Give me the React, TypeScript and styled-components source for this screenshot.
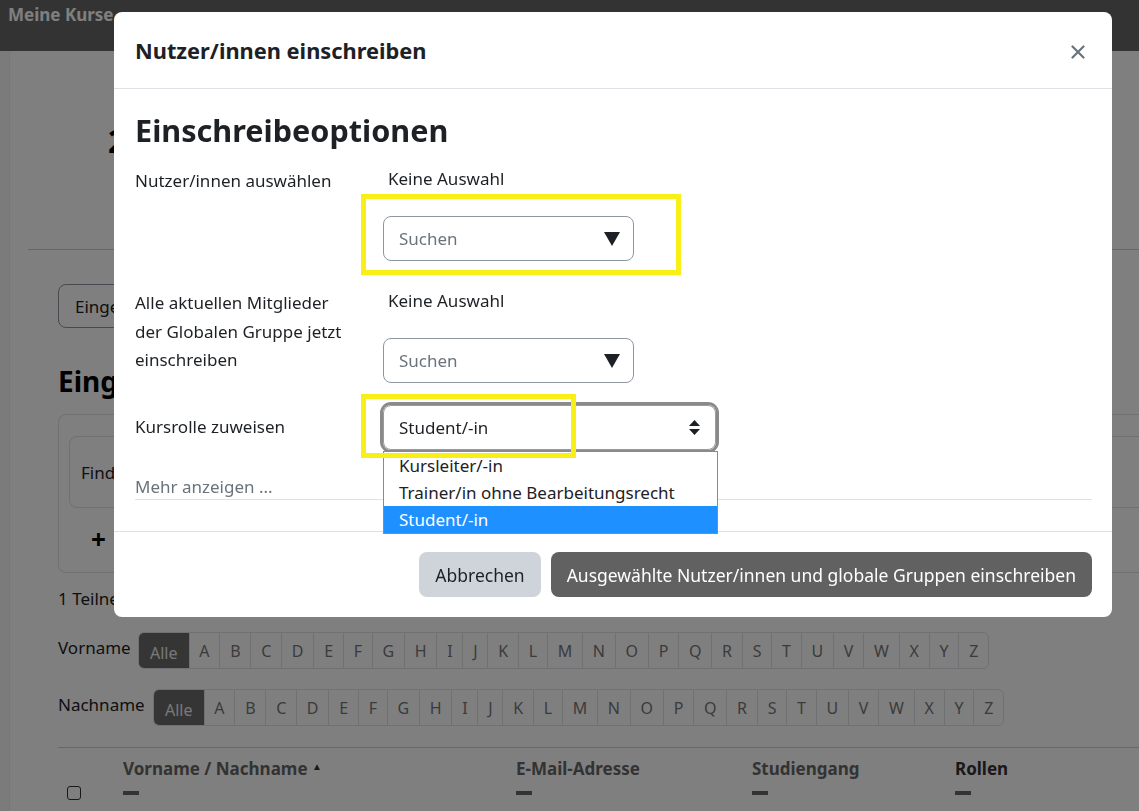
import styled, { createGlobalStyle } from 'styled-components';

const GlobalStyle = createGlobalStyle`
  html, body {
    margin: 0;
    padding: 0;
  }

  body {
    width: 1139px;
    height: 811px;
    overflow: hidden;
    background: #ffffff;
    color: #1d2125;
    font-family: 'Noto Sans', 'Open Sans', sans-serif;
  }
`;

const letters = 'ABCDEFGHIJKLMNOPQRSTUVWXYZ'.split('');

const roles = ['Kursleiter/-in', 'Trainer/in ohne Bearbeitungsrecht', 'Student/-in'];

function CaretDown() {
  return (
    <svg width='16' height='14' viewBox='0 0 16 14'>
      <polygon points='0,0 16,0 8,14' fill='#1d2125' />
    </svg>
  );
}

function UpDown() {
  return (
    <svg width='11' height='15' viewBox='0 0 11 15'>
      <polygon points='5.5,0 11,6 0,6' fill='#1d2125' />
      <polygon points='0,9 11,9 5.5,15' fill='#1d2125' />
    </svg>
  );
}

function CloseIcon() {
  return (
    <svg width='14' height='14' viewBox='0 0 14 14'>
      <path d='M1.5 1.5 L12.5 12.5 M12.5 1.5 L1.5 12.5' stroke='#6a737b' strokeWidth='2.2' strokeLinecap='round' />
    </svg>
  );
}

function InitialsBar({ label, offset }: { label: string; offset: number }) {
  return (
    <InitialsRow>
      <InitialsLabel style={{ width: offset }}>{label}</InitialsLabel>
      <InitialsGroup>
        <Initial $active>Alle</Initial>
        {letters.map((letter) => (
          <Initial key={letter}>{letter}</Initial>
        ))}
      </InitialsGroup>
    </InitialsRow>
  );
}

function BackgroundPage() {
  return (
    <Page>
      <NavBar>
        <Brand>Meine Kurse</Brand>
      </NavBar>
      <PageBody>
        <Rail />
        <Main>
          <CourseHeader>
            <CourseTitle>2023</CourseTitle>
          </CourseHeader>
          <Content>
            <ViewSelect>Eingeschrieben</ViewSelect>
            <PageTitle>Eingeschrieben</PageTitle>
            <FilterPanel>
              <FilterRow>Finden</FilterRow>
              <AddFilter>+</AddFilter>
            </FilterPanel>
            <Count>1 Teilnehmer/in gefunden</Count>
            <InitialsBar label='Vorname' offset={80} />
            <InitialsBar label='Nachname' offset={95} />
            <Table>
              <HeaderRow>
                <CheckCell />
                <HeadCell $width={393}>
                  Vorname / Nachname <SortArrow>▲</SortArrow>
                </HeadCell>
                <HeadCell $width={236}>E-Mail-Adresse</HeadCell>
                <HeadCell $width={203}>Studiengang</HeadCell>
                <HeadCell $width={120} $strong>
                  Rollen
                </HeadCell>
              </HeaderRow>
              <BodyRow>
                <CheckCell>
                  <CheckBox />
                </CheckCell>
                <DashCell $width={393}>
                  <Dash />
                </DashCell>
                <DashCell $width={236}>
                  <Dash />
                </DashCell>
                <DashCell $width={203}>
                  <Dash />
                </DashCell>
                <DashCell $width={120}>
                  <Dash />
                </DashCell>
              </BodyRow>
            </Table>
          </Content>
        </Main>
      </PageBody>
    </Page>
  );
}

function EnrolModal() {
  return (
    <Modal>
      <ModalHeader>
        <ModalTitle>Nutzer/innen einschreiben</ModalTitle>
        <CloseButton aria-label='Schließen'>
          <CloseIcon />
        </CloseButton>
      </ModalHeader>

      <ModalBody>
        <SectionTitle>Einschreibeoptionen</SectionTitle>

        <FormRow>
          <FieldLabel>Nutzer/innen auswählen</FieldLabel>
          <FieldControl>
            <NoSelection>Keine Auswahl</NoSelection>
            <SearchSelect>
              <Placeholder>Suchen</Placeholder>
              <CaretDown />
              <Highlight $left={-23} $top={-23} $width={320} $height={81} />
            </SearchSelect>
          </FieldControl>
        </FormRow>

        <FormRow $gap={18}>
          <FieldLabel>
            <LabelLine>Alle aktuellen Mitglieder</LabelLine>
            <LabelLine>der Globalen Gruppe jetzt</LabelLine>
            <LabelLine>einschreiben</LabelLine>
          </FieldLabel>
          <FieldControl>
            <NoSelection>Keine Auswahl</NoSelection>
            <SearchSelect>
              <Placeholder>Suchen</Placeholder>
              <CaretDown />
            </SearchSelect>
          </FieldControl>
        </FormRow>

        <RoleRow>
          <FieldLabel>Kursrolle zuweisen</FieldLabel>
          <RoleSelect>
            <RoleValue>Student/-in</RoleValue>
            <UpDown />
            <OptionList>
              {roles.map((role, index) => (
                <Option key={role} $selected={index === roles.length - 1}>
                  {role}
                </Option>
              ))}
            </OptionList>
            <Highlight $left={-23} $top={-12} $width={215} $height={64} />
          </RoleSelect>
        </RoleRow>

        <MoreLink>Mehr anzeigen ...</MoreLink>
      </ModalBody>

      <ModalFooter>
        <Button>Abbrechen</Button>
        <Button $primary>Ausgewählte Nutzer/innen und globale Gruppen einschreiben</Button>
      </ModalFooter>
    </Modal>
  );
}

export default function App() {
  return (
    <>
      <GlobalStyle />
      <BackgroundPage />
      <Backdrop />
      <EnrolModal />
    </>
  );
}

/* background page */

const Page = styled.div`
  width: 1139px;
  height: 811px;
  overflow: hidden;
  display: flex;
  flex-direction: column;
`;

const NavBar = styled.header`
  height: 51px;
  flex-shrink: 0;
  background: #666666;
  display: flex;
  align-items: flex-start;
  padding: 3px 8px 0;
  box-sizing: border-box;
`;

const Brand = styled.span`
  color: #ffffff;
  font-size: 17px;
  font-weight: 700;
`;

const PageBody = styled.div`
  flex: 1;
  display: flex;
`;

const Rail = styled.div`
  width: 9px;
  flex-shrink: 0;
  background: #f6f6f6;
  border-right: 1px solid #eeeeee;
`;

const Main = styled.main`
  flex: 1;
  padding-left: 18px;
  min-width: 0;
`;

const CourseHeader = styled.div`
  height: 199px;
  border-bottom: 1px solid #cfcfcf;
  padding: 70px 0 0 80px;
  box-sizing: border-box;
`;

const CourseTitle = styled.h1`
  margin: 0;
  font-size: 32px;
  line-height: 40px;
  font-weight: 700;
  color: #000000;
`;

const Content = styled.div`
  padding-left: 30px;
`;

const ViewSelect = styled.div`
  margin-top: 34px;
  width: 280px;
  height: 44px;
  border: 1px solid #8f959e;
  border-radius: 8px;
  box-sizing: border-box;
  padding: 0 16px;
  display: flex;
  align-items: center;
  font-size: 17px;
  color: #1d2125;
`;

const PageTitle = styled.h2`
  margin: 36px 0 0;
  font-size: 28px;
  line-height: 34px;
  font-weight: 700;
  color: #000000;
`;

const FilterPanel = styled.div`
  margin-top: 16px;
  height: 159px;
  border: 1px solid #dee2e6;
  border-right: none;
  border-radius: 8px 0 0 8px;
  box-sizing: border-box;
  padding: 21px 0 0 10px;
`;

const FilterRow = styled.div`
  height: 72px;
  border: 1px solid #dee2e6;
  border-right: none;
  border-radius: 8px 0 0 8px;
  box-sizing: border-box;
  padding-left: 11px;
  display: flex;
  align-items: center;
  font-size: 17px;
  color: #1d2125;
`;

const AddFilter = styled.div`
  margin: 16px 0 0 22px;
  font-size: 26px;
  font-weight: 700;
  line-height: 30px;
  color: #000000;
`;

const Count = styled.p`
  margin: 14px 0 0;
  font-size: 17px;
  line-height: 24px;
  color: #1d2125;
`;

const InitialsRow = styled.div`
  display: flex;
  align-items: center;
  margin-top: 21px;

  & + & {
    margin-top: 20px;
  }
`;

const InitialsLabel = styled.span`
  font-size: 17px;
  color: #1d2125;
  flex-shrink: 0;
  margin-top: -6px;
`;

const InitialsGroup = styled.div`
  display: flex;
  border: 1px solid #dee2e6;
  border-radius: 6px;
  overflow: hidden;
`;

const Initial = styled.span<{ $active?: boolean }>`
  height: 35px;
  padding: 0 ${(p) => (p.$active ? '11px' : '9.8px')};
  display: flex;
  align-items: center;
  justify-content: center;
  font-size: 16px;
  padding-top: ${(p) => (p.$active ? '4px' : '0')};
  box-sizing: border-box;
  background: ${(p) => (p.$active ? '#6a6a6a' : 'transparent')};
  color: ${(p) => (p.$active ? '#f0f0f0' : '#777777')};
  border-left: 1px solid #dee2e6;

  &:first-child {
    border-left: none;
  }
`;

const Table = styled.div`
  margin-top: 21px;
  border-top: 1px solid #cfcfcf;
`;

const HeaderRow = styled.div`
  display: flex;
  align-items: center;
  height: 40px;
`;

const BodyRow = styled.div`
  display: flex;
  align-items: center;
  height: 10px;
`;

const CheckCell = styled.div`
  width: 65px;
  flex-shrink: 0;
  padding-left: 9px;
  box-sizing: border-box;
`;

const HeadCell = styled.div<{ $width: number; $strong?: boolean }>`
  width: ${(p) => p.$width}px;
  flex-shrink: 0;
  font-size: 17px;
  font-weight: 700;
  color: ${(p) => (p.$strong ? '#333333' : '#666666')};
`;

const SortArrow = styled.span`
  font-size: 10px;
  vertical-align: 5px;
  color: #333333;
`;

const DashCell = styled.div<{ $width: number }>`
  width: ${(p) => p.$width}px;
  flex-shrink: 0;
`;

const Dash = styled.div`
  width: 16px;
  height: 4px;
  background: #666666;
`;

const CheckBox = styled.div`
  width: 12px;
  height: 12px;
  border: 1px solid #333333;
  border-radius: 3px;
`;

/* modal */

const Backdrop = styled.div`
  position: fixed;
  inset: 0;
  background: rgba(0, 0, 0, 0.5);
`;

const Modal = styled.section`
  position: fixed;
  top: 12px;
  left: 114px;
  width: 998px;
  height: 605px;
  background: #ffffff;
  border-radius: 8px;
  display: flex;
  flex-direction: column;
`;

const ModalHeader = styled.div`
  height: 77px;
  flex-shrink: 0;
  box-sizing: border-box;
  border-bottom: 1px solid #dee2e6;
  padding: 0 27px 0 21px;
  display: flex;
  align-items: center;
  justify-content: space-between;
`;

const ModalTitle = styled.h5`
  margin: 0;
  font-size: 21.8px;
  font-weight: 700;
  color: #1d2125;
`;

const CloseButton = styled.button`
  border: none;
  background: none;
  padding: 0;
  display: flex;
  cursor: pointer;
  margin-top: 4px;
`;

const ModalBody = styled.div`
  flex: 1;
  padding: 23px 20px 0 21px;
`;

const SectionTitle = styled.h3`
  margin: 0 0 19px;
  font-size: 30.6px;
  line-height: 36px;
  font-weight: 700;
  color: #1d2125;
`;

const FormRow = styled.div<{ $gap?: number }>`
  display: grid;
  grid-template-columns: 248px 1fr;
  margin-bottom: ${(p) => p.$gap ?? 28}px;
`;

const FieldLabel = styled.label`
  font-size: 17px;
  line-height: 28.5px;
  color: #1d2125;
`;

const LabelLine = styled.span`
  display: block;
`;

const FieldControl = styled.div`
  display: flex;
  flex-direction: column;
  align-items: flex-start;
`;

const NoSelection = styled.span`
  font-size: 17px;
  line-height: 24px;
  padding-left: 5px;
  color: #1d2125;
`;

const SearchSelect = styled.div`
  position: relative;
  margin-top: 25px;
  width: 251px;
  height: 45px;
  box-sizing: border-box;
  border: 1px solid #8f959e;
  border-radius: 8px;
  padding: 0 13px 0 15px;
  display: flex;
  align-items: center;
  justify-content: space-between;
`;

const Placeholder = styled.span`
  font-size: 17px;
  color: #6a737b;
`;

const Highlight = styled.div<{ $left: number; $top: number; $width: number; $height: number }>`
  position: absolute;
  left: ${(p) => p.$left}px;
  top: ${(p) => p.$top}px;
  width: ${(p) => p.$width}px;
  height: ${(p) => p.$height}px;
  box-sizing: border-box;
  border: 5px solid #f7ef16;
  z-index: 3;
  pointer-events: none;
`;

const RoleRow = styled.div`
  display: grid;
  grid-template-columns: 248px 1fr;
  align-items: center;
  padding: 4px 0 0;
`;

const RoleSelect = styled.div`
  position: relative;
  width: 333px;
  height: 45px;
  box-sizing: border-box;
  border: 1px solid #9a9a9a;
  border-radius: 8px;
  box-shadow: 0 0 0 3px #8a8a8a;
  padding: 0 15px;
  display: flex;
  align-items: center;
  justify-content: space-between;
`;

const RoleValue = styled.span`
  font-size: 17px;
  color: #1d2125;
`;

const OptionList = styled.ul`
  position: absolute;
  left: -1px;
  top: 45px;
  width: 333px;
  margin: 0;
  padding: 0;
  list-style: none;
  background: #ffffff;
  border: 1px solid #8a8a8a;
  z-index: 2;
`;

const Option = styled.li<{ $selected?: boolean }>`
  height: 27px;
  line-height: 27px;
  padding-left: 15px;
  font-size: 17px;
  background: ${(p) => (p.$selected ? '#1e90ff' : '#ffffff')};
  color: ${(p) => (p.$selected ? '#ffffff' : '#1d2125')};
`;

const MoreLink = styled.div`
  margin-top: 25px;
  font-size: 17px;
  line-height: 24px;
  color: #6a737b;
  border-bottom: 1px solid #dee2e6;
`;

const ModalFooter = styled.div`
  flex-shrink: 0;
  height: 86px;
  box-sizing: border-box;
  border-top: 1px solid #dee2e6;
  padding: 20px;
  display: flex;
  justify-content: flex-end;
  gap: 10px;
`;

const Button = styled.button<{ $primary?: boolean }>`
  height: 45px;
  border: none;
  border-radius: 8px;
  padding: 0 16px;
  font-family: inherit;
  font-size: 17.5px;
  background: ${(p) => (p.$primary ? '#616161' : '#ced4da')};
  color: ${(p) => (p.$primary ? '#ffffff' : '#1d2125')};
  cursor: pointer;
`;
